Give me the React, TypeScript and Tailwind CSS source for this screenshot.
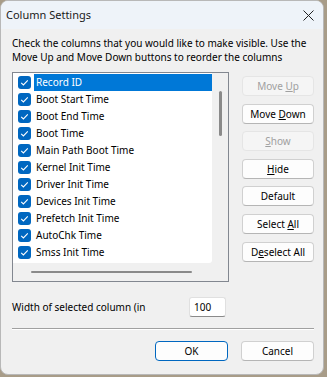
import React from 'react'

const columns = [
  'Record ID',
  'Boot Start Time',
  'Boot End Time',
  'Boot Time',
  'Main Path Boot Time',
  'Kernel Init Time',
  'Driver Init Time',
  'Devices Init Time',
  'Prefetch Init Time',
  'AutoChk Time',
  'Smss Init Time',
]

const Check: React.FC = () => (
  <span className="w-[13px] h-[13px] shrink-0 rounded-[3px] bg-[#0067c0] flex items-center justify-center">
    <svg width="13" height="13" viewBox="0 0 13 13">
      <path d="M3.2 6.8 L5.4 9 L9.8 4.4" fill="none" stroke="white" strokeWidth="1.1" />
    </svg>
  </span>
)

const Btn: React.FC<{ disabled?: boolean; children: React.ReactNode; primary?: boolean }> = ({
  disabled,
  children,
  primary,
}) => (
  <button
    className={
      disabled
        ? 'w-[72px] h-[20px] rounded-[4px] border border-[#e5e5e5] bg-[#f5f5f5] text-[#a0a0a0] text-[10px] leading-none'
        : primary
          ? 'w-[73px] h-[20px] rounded-[4px] border border-[#0067c0] bg-[#fdfdfd] text-black text-[10px] leading-none'
          : 'w-[72px] h-[20px] rounded-[4px] border border-[#d0d0d0] border-b-[#b5b5b5] bg-[#fdfdfd] text-black text-[10px] leading-none'
    }
  >
    {children}
  </button>
)

export default function App() {
  return (
    <div className="w-[327px] h-[377px] bg-[#a89c88] font-['Noto_Sans',sans-serif]">
      <div className="w-[324px] h-[375px] rounded-[8px] border border-[#b8b8b8] bg-[#f0f0f0] overflow-hidden flex flex-col">
        {/* Title bar */}
        <div className="h-[28px] bg-[#eef3f9] flex items-center justify-between pl-[5px] pr-[9px]">
          <span className="text-[11px] text-[#1a1a1a]">Column Settings</span>
          <svg width="11" height="11" viewBox="0 0 11 11">
            <path d="M0.5 0.5 L10.5 10.5 M10.5 0.5 L0.5 10.5" stroke="#222" strokeWidth="1" />
          </svg>
        </div>

        {/* Body */}
        <div className="flex-1 pl-[11px] pr-[9px] pt-[7px] text-[10px] text-black">
          <p className="leading-[14px]">
            Check the columns that you would like to make visible. Use the Move Up and Move Down buttons to reorder the
            columns
          </p>

          <div className="mt-[8px] flex">
            {/* Listbox */}
            <div className="w-[217px] h-[210px] border border-[#828790] flex flex-col">
              <div className="flex h-[190px]">
                <div className="w-[199px] bg-white rounded-br-[3px] pt-[1px]">
                  {columns.map((c, i) => (
                    <div key={c} className="h-[17px] flex items-center pl-[5px]">
                      <Check />
                      <span
                        className={
                          i === 0
                            ? 'ml-[3px] flex-1 h-[17px] flex items-center pl-[2px] bg-[#0078d7] text-white'
                            : 'ml-[3px] flex-1 h-[17px] flex items-center pl-[2px]'
                        }
                      >
                        {c}
                      </span>
                    </div>
                  ))}
                </div>
                <div className="flex-1 flex justify-center pt-[18px]">
                  <div className="w-[3px] h-[45px] rounded-full bg-[#8a8a8a]" />
                </div>
              </div>
              <div className="flex-1 pl-[18px] pt-[8px]">
                <div className="w-[161px] h-[2px] rounded-full bg-[#8a8a8a]" />
              </div>
            </div>

            {/* Buttons */}
            <div className="ml-[13px] pt-[4px] flex flex-col gap-[7.6px]">
              <Btn disabled>
                Move <u>U</u>p
              </Btn>
              <Btn>
                Move <u>D</u>own
              </Btn>
              <Btn disabled>
                <u>S</u>how
              </Btn>
              <Btn>
                <u>H</u>ide
              </Btn>
              <Btn>Default</Btn>
              <Btn>
                Select <u>A</u>ll
              </Btn>
              <Btn>
                D<u>e</u>select All
              </Btn>
            </div>
          </div>

          {/* Width row */}
          <div className="mt-[15px] flex items-center h-[20px]">
            <span className="w-[177px]">Width of selected column (in</span>
            <div className="w-[37px] h-[20px] bg-white border border-[#e0e0e0] border-b-[#8a8a8a] rounded-[3px] flex items-center pl-[4px]">
              100
            </div>
          </div>

          <div className="mt-[11px] w-[302px] border-t border-[#a0a0a0] border-b border-b-white" />

          <div className="mt-[11px] flex justify-end gap-[13px]">
            <Btn primary>OK</Btn>
            <button className="w-[73px] h-[20px] rounded-[4px] border border-[#d0d0d0] border-b-[#b5b5b5] bg-[#fdfdfd] text-black text-[10px] leading-none">
              Cancel
            </button>
          </div>
        </div>
      </div>
    </div>
  )
}
